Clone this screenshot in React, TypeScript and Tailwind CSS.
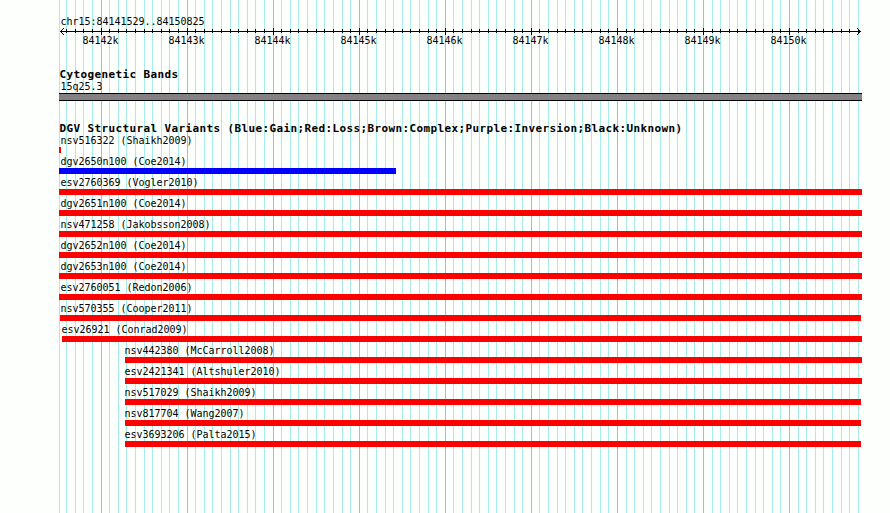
const START = 84141529
const ORIGIN = 60.515
const SCALE = 0.08606

const toX = (pos: number) => Math.floor(ORIGIN + (pos - START) * SCALE)

const ticks = Array.from({ length: 93 }, (_, i) => {
  const pos = 84141600 + i * 100
  return { pos, x: toX(pos), major: pos % 1000 === 0 }
})

const majorTicks = ticks.filter((tick) => tick.major)

const COLORS = {
  gain: 'bg-[#0000ff]',
  loss: 'bg-[#ff0000]',
}

type Variant = {
  id: string
  study: string
  start: number
  end: number
  label: number
  type: 'gain' | 'loss'
}

const variants: Variant[] = [
  { id: 'nsv516322', study: 'Shaikh2009', start: 59, end: 61, label: 60.5, type: 'loss' },
  { id: 'dgv2650n100', study: 'Coe2014', start: 59, end: 396, label: 60.5, type: 'gain' },
  { id: 'esv2760369', study: 'Vogler2010', start: 59, end: 862, label: 60.5, type: 'loss' },
  { id: 'dgv2651n100', study: 'Coe2014', start: 59, end: 862, label: 60.5, type: 'loss' },
  { id: 'nsv471258', study: 'Jakobsson2008', start: 59, end: 862, label: 60.5, type: 'loss' },
  { id: 'dgv2652n100', study: 'Coe2014', start: 59, end: 862, label: 60.5, type: 'loss' },
  { id: 'dgv2653n100', study: 'Coe2014', start: 59, end: 862, label: 60.5, type: 'loss' },
  { id: 'esv2760051', study: 'Redon2006', start: 59, end: 862, label: 60.5, type: 'loss' },
  { id: 'nsv570355', study: 'Cooper2011', start: 60, end: 861, label: 60.5, type: 'loss' },
  { id: 'esv26921', study: 'Conrad2009', start: 62, end: 862, label: 61.5, type: 'loss' },
  { id: 'nsv442380', study: 'McCarroll2008', start: 125, end: 862, label: 124.5, type: 'loss' },
  { id: 'esv2421341', study: 'Altshuler2010', start: 125, end: 862, label: 124.5, type: 'loss' },
  { id: 'nsv517029', study: 'Shaikh2009', start: 125, end: 861, label: 124.5, type: 'loss' },
  { id: 'nsv817704', study: 'Wang2007', start: 125, end: 861, label: 124.5, type: 'loss' },
  { id: 'esv3693206', study: 'Palta2015', start: 125, end: 861, label: 124.5, type: 'loss' },
]

// Vertical guide lines behind every track
function Grid() {
  return (
    <svg className="absolute inset-0 -z-10" width="890" height="513" shapeRendering="crispEdges">
      <rect x="59" y="0" width="1" height="513" fill="#a8ecea" />
      {ticks.map((tick) => (
        <rect key={tick.pos} x={tick.x} y="0" width="1" height="513" fill={tick.major ? '#86c8e8' : '#a8ecea'} />
      ))}
    </svg>
  )
}

function Ruler() {
  return (
    <svg className="block" width="890" height="8" shapeRendering="crispEdges">
      <rect x="60" y="3" width="801" height="1" />
      {ticks.map((tick) => (
        <rect
          key={tick.pos}
          x={tick.x}
          y={tick.major ? 0 : 1}
          width="1"
          height={tick.major ? 7 : 4}
        />
      ))}
      {/* Arrow heads */}
      {[1, 2, 3].map((d) => (
        <g key={d}>
          <rect x={60 + d} y={3 - d} width="1" height="1" />
          <rect x={60 + d} y={3 + d} width="1" height="1" />
          <rect x={860 - d} y={3 - d} width="1" height="1" />
          <rect x={860 - d} y={3 + d} width="1" height="1" />
        </g>
      ))}
    </svg>
  )
}

function TrackTitle({ children }: { children: string }) {
  return (
    <h2 className="h-[13px] pl-[59.5px] text-[11px] leading-[15px] font-bold tracking-[0.378px]">{children}</h2>
  )
}

function VariantRow({ variant }: { variant: Variant }) {
  return (
    <div className="h-[21px]">
      <p className="h-[15px] leading-[17px]" style={{ paddingLeft: variant.label }}>
        {variant.id} ({variant.study})
      </p>
      <div
        className={`h-[6px] ${COLORS[variant.type]}`}
        style={{ marginLeft: variant.start, width: variant.end - variant.start }}
      />
    </div>
  )
}

export default function App() {
  return (
    <main className="relative isolate h-[513px] w-[890px] overflow-hidden bg-[#fdfffc] pt-[15px] font-['DejaVu_Sans_Mono',monospace] text-[10px] tracking-[-0.02px] whitespace-nowrap text-black">
      <Grid />

      <p className="h-[13px] pl-[60.5px] leading-[13px]">chr15:84141529..84150825</p>
      <Ruler />
      <div className="flex h-[10px] gap-[50px] pl-[82.5px] leading-[10px]">
        {majorTicks.map((tick) => (
          <span key={tick.pos} className="w-9">
            {tick.pos / 1000}k
          </span>
        ))}
      </div>

      {/* Cytogenetic Bands */}
      <section className="pt-[21px]">
        <TrackTitle>Cytogenetic Bands</TrackTitle>
        <p className="h-[13px] pl-[60.5px] leading-[13px]">15q25.3</p>
        <div className="ml-[59px] h-2 w-[803px] border-y border-black bg-[#848084]" />
      </section>

      {/* Structural Variants */}
      <section className="pt-5">
        <TrackTitle>
          DGV Structural Variants (Blue:Gain;Red:Loss;Brown:Complex;Purple:Inversion;Black:Unknown)
        </TrackTitle>
        <div className="-mt-0.5">
          {variants.map((variant) => (
            <VariantRow key={variant.id} variant={variant} />
          ))}
        </div>
      </section>
    </main>
  )
}
